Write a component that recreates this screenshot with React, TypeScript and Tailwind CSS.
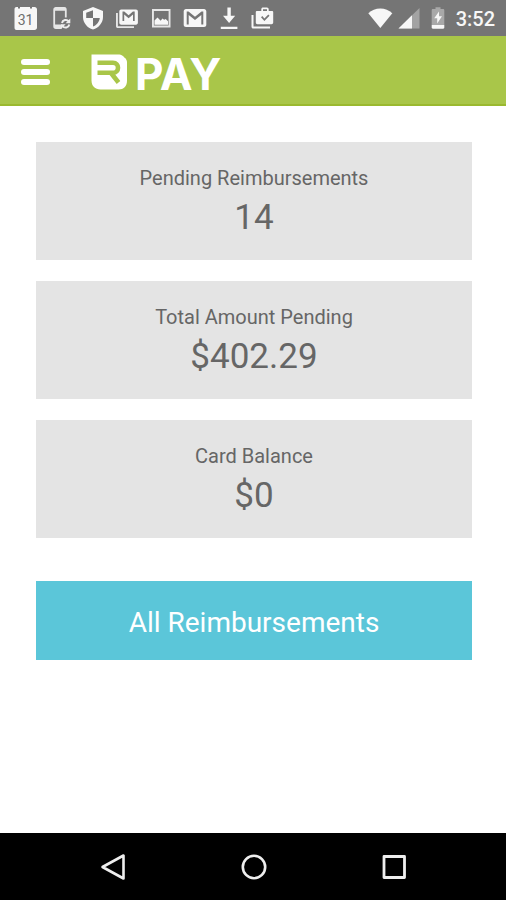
import type { ReactNode } from "react";

const stats = [
  { label: "Pending Reimbursements", value: "14" },
  { label: "Total Amount Pending", value: "$402.29" },
  { label: "Card Balance", value: "$0" },
];

function StatusIcon({ children }: { children: ReactNode }) {
  return (
    <svg viewBox="0 0 24 24" className="w-6 h-6 flex-shrink-0 overflow-visible" fill="#f7f7f7" aria-hidden="true">
      {children}
    </svg>
  );
}

function StatusBar() {
  return (
    <div className="h-9 bg-[#757575] flex items-center justify-between pl-[13px] pr-[11px]">
      <div className="flex items-center gap-[10px]">
        {/* Calendar */}
        <StatusIcon>
          <path d="M3.500 1H5v1.500h2V1h10v1.500h2V1h2.500C23 1 24 2 24 3.500v18c0 1.500-1 2.500-2.500 2.500h-18C2 24 1.500 23 1.500 21.500v-18C1.500 2 2 1 3.500 1z" />
          <text
            x="12.5"
            y="19"
            textAnchor="middle"
            fontSize="14"
            fontFamily="Roboto, sans-serif"
            fill="#6f6f6f"
          >
            31
          </text>
        </StatusIcon>
        {/* Phone sync */}
        <StatusIcon>
          <path
            d="M18.800 11.500V3.700c0-1.100-.7-1.800-1.800-1.800H9c-1.100 0-1.800.7-1.800 1.800v16.600c0 1.100.7 1.800 1.800 1.800h5.500"
            fill="none"
            stroke="#e6e6e6"
            strokeWidth="1.800"
          />
          <path d="M8 1.500h10.500v3.200H8zM8 18.500h6.500V22H8z" fill="#e6e6e6" />
          <path
            d="M15 17a3.800 3.800 0 0 1 6.800-1.500M22.300 18.500a3.800 3.800 0 0 1-6.800 1.500"
            fill="none"
            stroke="#eeeeee"
            strokeWidth="2"
          />
          <path d="M23.300 12.500v4.700h-4.700zM14 23v-4.700h4.700z" fill="#eeeeee" />
        </StatusIcon>
        {/* Shield */}
        <StatusIcon>
          <path d="M12 1L2 5v6c0 5.800 4.300 11 10 12.500 5.700-1.500 10-6.700 10-12.500V5L12 1zm0 11h6.800c-.5 3.900-3.200 7.300-6.800 8.400V12H5.200V6.800L12 4.200V12z" />
        </StatusIcon>
        {/* Mail stack */}
        <StatusIcon>
          <path d="M1 7h1.900v13.200H19V22H2.800C1.700 22 1 21.300 1 20.200z" fill="#e6e6e6" />
          <path
            fillRule="evenodd"
            d="M6.200 3.500h14.800c1.100 0 1.900.8 1.900 1.900v11.400c0 1.100-.8 1.900-1.900 1.900H6.200c-1.100 0-1.900-.8-1.900-1.900V5.400c0-1.100.8-1.900 1.900-1.900zM7.500 5.500v9.500h1.700V8.500l4.400 3.700 4.400-3.700V15h1.700V5.500h-1.800l-4.300 3.800-4.300-3.800z"
          />
        </StatusIcon>
        {/* Picture */}
        <StatusIcon>
          <path
            fillRule="evenodd"
            d="M3 3h18.500v18.500H3zM4.900 4.900v14.700h14.700V4.900z"
            fill="#e6e6e6"
          />
          <path d="M5.500 18.800v-4.300l3-3 3.200 3.200 1.700-2.200 1.800 1.200 1.500-.7 2.300 2.300v3.500z" />
        </StatusIcon>
        {/* Mail */}
        <StatusIcon>
          <path
            fillRule="evenodd"
            d="M3 3h18c1.300 0 2.300 1 2.300 2.300v13.400c0 1.300-1 2.300-2.300 2.300H3C1.700 21 .7 20 .7 18.700V5.300C.7 4 1.700 3 3 3zm.7 2.500v13h2V9l6.300 5 6.300-5v9.500h2v-13h-1.800L12 10.800 5.500 5.500z"
          />
        </StatusIcon>
        {/* Download */}
        <StatusIcon>
          <path d="M10.400 1.500h3.400v8.200h4.400L12.100 17 6 9.700h4.400zM3.800 20.700h16.600V23H3.800z" />
        </StatusIcon>
        {/* Work check */}
        <StatusIcon>
          <path d="M.5 9h2v11.500H19v2H2.300c-1 0-1.800-.8-1.800-1.800z" />
          <path
            fillRule="evenodd"
            d="M10.300 5V3.200c0-1 .8-1.700 1.700-1.700h4c.9 0 1.700.8 1.700 1.700V5h3.600c.5 0 .9.400.9.900v10.700c0 1-.8 1.700-1.700 1.700h-14c-.9 0-1.700-.7-1.700-1.700V5.900c0-.5.400-.9.900-.9zm1.700 0h4V3.200h-4zm-2 6.300l3.400 3.800 5.100-5.400-1.200-1.200-3.900 4-2.100-2.400z"
          />
        </StatusIcon>
      </div>
      <div className="flex items-center gap-[5px]">
        {/* Wifi */}
        <StatusIcon>
          <path d="M13.300 22L1.300 7.200C4.600 4.200 8.700 2.500 13.300 2.500S22 4.200 25.300 7.200z" />
        </StatusIcon>
        {/* Signal */}
        <StatusIcon>
          <path d="M23.500 2v20.500H2.500z" fill="#a3a3a3" />
          <path d="M16 9.300v13.200H2.500z" />
        </StatusIcon>
        {/* Battery charging */}
        <StatusIcon>
          <path d="M10.500 1.200h5V3H18c.8 0 1.300.5 1.300 1.200V19H6.700V4.200C6.700 3.500 7.200 3 8 3h2.500z" fill="#a8a8a8" />
          <path d="M6.700 19h12.600v2.600c0 .8-.5 1.200-1.300 1.200H8c-.8 0-1.300-.4-1.300-1.200z" />
          <path d="M14 5.500l-4.800 6.800h3v5.200l4.800-7.200h-3z" />
        </StatusIcon>
        <span className="w-[41px] pt-0.5 text-right text-xl leading-6 font-medium text-[#f7f7f7]">3:52</span>
      </div>
    </div>
  );
}

function Header() {
  return (
    <header className="h-[70px] pt-1 bg-[#a9c649] border-b-2 border-[#9ab92f] flex items-center pl-5 gap-[39px]">
      <button type="button" aria-label="Menu" className="w-8 h-8 flex flex-col items-start justify-center gap-1 pl-px">
        <span className="w-[29px] h-[6px] rounded-[3px] bg-white" />
        <span className="w-[29px] h-[6px] rounded-[3px] bg-white" />
        <span className="w-[29px] h-[6px] rounded-[3px] bg-white" />
      </button>
      <div className="flex items-center gap-2">
        <svg viewBox="0 0 36 36" className="w-9 h-9" aria-hidden="true">
          <path
            d="M.5.500H28.500C31 .5 36 5 36 8v19c0 5-3.500 8.500-8.500 8.500H9.500C4 35.500.5 32 .5 26.500z"
            fill="#fff"
          />
          <path
            d="M6.500 8.800H22c3.300 0 5 2.200 5 4.900s-1.700 5.100-5 5.100H6.500M20 19l7.500 9.500"
            fill="none"
            stroke="#a9c649"
            strokeWidth="4.600"
            strokeLinejoin="round"
          />
        </svg>
        <span className="pt-1 font-['Inter'] font-bold text-[44px] leading-[48px] text-white">PAY</span>
      </div>
    </header>
  );
}

function NavBar() {
  return (
    <nav className="h-[67px] bg-black flex items-center justify-between pl-[100px] pr-[99px]">
      <button type="button" aria-label="Back">
        <svg viewBox="0 0 26 26" className="w-[26px] h-[26px]" fill="none" stroke="#eeeeee" strokeWidth="2.600" strokeLinejoin="round">
          <path d="M23.500 1.500v23L2.500 13z" />
        </svg>
      </button>
      <button type="button" aria-label="Home">
        <svg viewBox="0 0 26 26" className="w-[26px] h-[26px]" fill="none" stroke="#eeeeee" strokeWidth="2.600">
          <circle cx="13" cy="13" r="11.200" />
        </svg>
      </button>
      <button type="button" aria-label="Recent apps">
        <svg viewBox="0 0 26 26" className="w-[26px] h-[26px]" fill="none" stroke="#eeeeee" strokeWidth="2.800" strokeLinejoin="round">
          <rect x="3" y="2.500" width="20.500" height="21" />
        </svg>
      </button>
    </nav>
  );
}

export default function App() {
  return (
    <div className="min-h-screen flex flex-col bg-white font-['Roboto',sans-serif]">
      <StatusBar />
      <Header />
      <main className="flex-1 pt-9 pl-9 pr-[34px]">
        <div className="flex flex-col gap-[21px]">
          {stats.map((stat) => (
            <section key={stat.label} className="bg-[#e4e4e4] pt-[22px] pb-4 text-center text-[#666666]">
              <h2 className="text-xl leading-7">{stat.label}</h2>
              <p className="text-[35px] leading-[52px]">{stat.value}</p>
            </section>
          ))}
        </div>
        <button
          type="button"
          className="mt-[43px] w-full pt-[22px] pb-[18px] bg-[#5bc6d9] text-[28px] leading-[39px] text-white"
        >
          All Reimbursements
        </button>
      </main>
      <NavBar />
    </div>
  );
}
